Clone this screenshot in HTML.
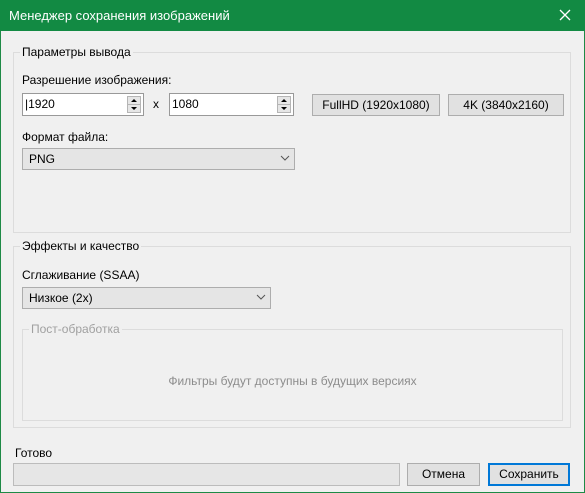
<!DOCTYPE html>
<html><head><meta charset="utf-8"><style>
*{box-sizing:border-box;margin:0;padding:0}
body{width:585px;height:493px;background:#f0f0f0;font-family:"Liberation Sans",sans-serif;font-size:12px;color:#000;position:relative;overflow:hidden}
.a{position:absolute}
.win{left:0;top:0;width:585px;height:493px;border:1px solid #1e8a46;border-top:none}
.title{left:0;top:0;width:585px;height:31px;background:#128a43;color:#fff;font-size:13px;line-height:31px;padding-left:9px}
.grp{border:1px solid #dcdcdc}
.lbl{background:#f0f0f0;padding:0 2px;line-height:14px}
.box{background:#fff;border:1px solid #7a7a7a}
.btn{background:#e1e1e1;border:1px solid #adadad;text-align:center;line-height:20px}
.cmb{background:#e5e5e5;border:1px solid #adadad;line-height:20px;padding-left:6px}
.sp{width:14px;height:9px;background:#e6e6e6;border:1px solid #b5b5b5}
</style></head><body>
<div class="a win"></div>
<div class="a title">Менеджер сохранения изображений</div>
<svg class="a" style="left:559px;top:9px" width="12" height="12"><path d="M1 1L11 11M11 1L1 11" stroke="#fff" stroke-width="1.3"/></svg>

<div class="a grp" style="left:13px;top:52px;width:558px;height:181px"></div>
<div class="a lbl" style="left:20px;top:45px">Параметры вывода</div>
<div class="a" style="left:22px;top:73px">Разрешение изображения:</div>
<div class="a box" style="left:22px;top:93px;width:122px;height:23px;line-height:21px;padding-left:2px;border-color:#999">|1920</div>
<div class="a sp" style="left:127px;top:96px"></div><div class="a sp" style="left:127px;top:104px"></div>
<svg class="a" style="left:130px;top:98px" width="8" height="16"><path d="M1 4L4 1L7 4Z M1 9L4 12L7 9Z" fill="#000"/></svg>
<div class="a" style="left:153px;top:97px">x</div>
<div class="a box" style="left:169px;top:93px;width:125px;height:23px;line-height:21px;padding-left:2px;border-color:#999">1080</div>
<div class="a sp" style="left:277px;top:96px"></div><div class="a sp" style="left:277px;top:104px"></div>
<svg class="a" style="left:280px;top:98px" width="8" height="16"><path d="M1 4L4 1L7 4Z M1 9L4 12L7 9Z" fill="#000"/></svg>
<div class="a btn" style="left:312px;top:94px;width:128px;height:22px">FullHD (1920x1080)</div>
<div class="a btn" style="left:448px;top:94px;width:116px;height:22px">4K (3840x2160)</div>
<div class="a" style="left:22px;top:130px">Формат файла:</div>
<div class="a cmb" style="left:22px;top:148px;width:273px;height:22px">PNG</div>
<svg class="a" style="left:280px;top:155px" width="10" height="6"><path d="M1 1L5 5L9 1" stroke="#555" fill="none"/></svg>

<div class="a grp" style="left:13px;top:246px;width:558px;height:182px"></div>
<div class="a lbl" style="left:20px;top:239px">Эффекты и качество</div>
<div class="a" style="left:22px;top:268px">Сглаживание (SSAA)</div>
<div class="a cmb" style="left:22px;top:287px;width:249px;height:22px">Низкое (2x)</div>
<svg class="a" style="left:256px;top:294px" width="10" height="6"><path d="M1 1L5 5L9 1" stroke="#555" fill="none"/></svg>
<div class="a grp" style="left:22px;top:329px;width:541px;height:92px"></div>
<div class="a lbl" style="left:29px;top:322px;color:#a0a0a0">Пост-обработка</div>
<div class="a" style="left:22px;top:374px;width:541px;text-align:center;color:#8c8c8c">Фильтры будут доступны в будущих версиях</div>

<div class="a" style="left:15px;top:446px">Готово</div>
<div class="a" style="left:13px;top:463px;width:387px;height:23px;background:#e6e6e6;border:1px solid #bcbcbc"></div>
<div class="a btn" style="left:407px;top:463px;width:73px;height:23px">Отмена</div>
<div class="a btn" style="left:488px;top:463px;width:82px;height:23px;border:2px solid #0078d7;line-height:19px">Сохранить</div>
</body></html>
